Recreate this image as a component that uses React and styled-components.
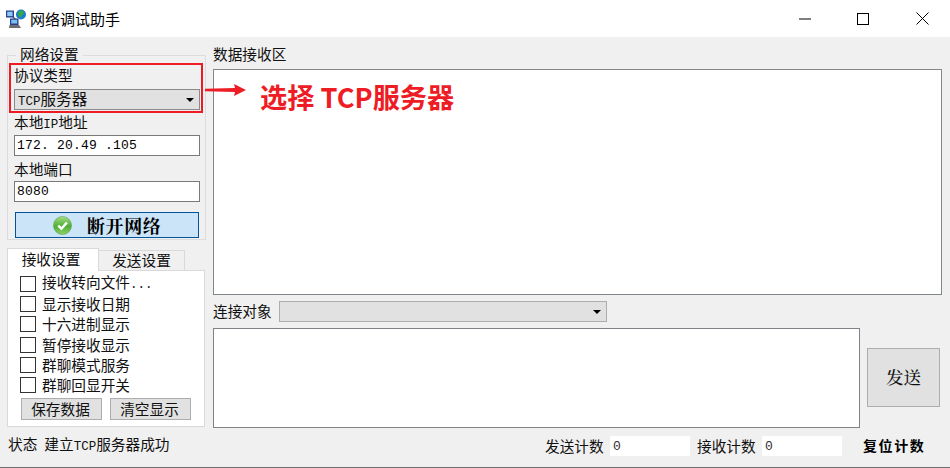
import React from "react";
import styled, { createGlobalStyle } from "styled-components";

const Global = createGlobalStyle`
  html, body { margin: 0; padding: 0; background: #f0f0f0; }
  * { box-sizing: border-box; }
  #root { width: 950px; height: 468px; overflow: hidden; }
`;
const CJK = `"Noto Sans CJK SC", "Liberation Sans", sans-serif`;
const MONO = `"Liberation Mono", "Noto Sans CJK SC", monospace`;

const Win = styled.div`
  position: relative; width: 950px; height: 468px; background: #f0f0f0;
  display: flex; flex-direction: column; font: 14.67px/16px ${CJK}; color: #111;
  border-bottom: 1px solid #6f6f6f;
`;
const Ascii = styled.span`font-family: ${MONO}; font-size: 12.5px;`;
const TitleBar = styled.header`
  height: 37px; flex: none; background: #fff; display: flex; align-items: center; padding: 0 0 0 6px;
`;
const AppName = styled.span`flex: 1; font-size: 15px; color: #000;`;
const WinBtn = styled.span`
  width: ${p => p.$w || 58}px; height: 37px; flex: none; display: flex; align-items: center; justify-content: center; margin-right: ${p => p.$mr || 0}px;
`;
const Body = styled.div`flex: 1; display: flex; padding: 0 9px 0 7px;`;
const Left = styled.div`width: 199px; flex: none; display: flex; flex-direction: column;`;
const Right = styled.div`flex: 1; margin-left: 7px; display: flex; flex-direction: column; min-width: 0;`;

const Group = styled.fieldset`
  margin: 11px 0 0; padding: 0; height: 192px; border: 1px solid #dcdcdc; width: 199px; min-width: 0;
  position: relative; display: block;
`;
const Legend = styled.legend`
  margin-left: 8px; padding: 0 4px; line-height: 12px; height: 14px;
`;
const Fields = styled.div`padding: 5px 6px 0 6px; display: flex; flex-direction: column;`;
const FieldLabel = styled.label`display: block; height: 16px; margin-bottom: ${p => p.$mb ?? 5}px; white-space: nowrap;`;
const Combo = styled.div`
  height: 21px; width: ${p => p.$w || 186}px; background: #e1e1e1; border: 1px solid ${p => p.$line || "#adadad"}; display: flex; align-items: center;
  padding-left: 3px; flex: none; margin-bottom: ${p => p.$mb || 0}px;
`;
const ComboText = styled.span`flex: 1; font-size: 15.6px; line-height: 18px;`;
const Caret = styled.span`
  width: 0; height: 0; border-left: 4px solid transparent; border-right: 4px solid transparent; border-top: 4px solid #000; margin-right: 5px;
`;
const Input = styled.div`
  height: 21px; width: 186px; background: #fff; border: 1px solid #7a7a7a; font: 13px/20px ${MONO}; padding-left: 2px; white-space: pre;
  letter-spacing: 0.2px; margin-bottom: ${p => p.$mb || 4}px; color: #000;
`;
const ConnectBtn = styled.div`
  margin: 5px 0 0 1px; width: 184px; height: 26px; background: #cce4f7; border: 1px solid #005499;
  display: flex; align-items: center; gap: 15px; padding-left: 37px;
  font: 700 18px/20px "Noto Serif CJK SC", ${CJK}; letter-spacing: 0.6px; color: #000;
`;

const TabRow = styled.div`display: flex; align-items: flex-end; height: 23px; margin-top: 8px;`;
const Tab = styled.div`
  height: ${p => p.$on ? 23 : 21}px; width: ${p => p.$on ? 92 : 86}px; background: ${p => p.$on ? "#fff" : "#f0f0f0"};
  border: 1px solid #d9d9d9; border-bottom: ${p => p.$on ? "none" : "1px solid #d9d9d9"}; ${p => p.$on ? "" : "border-left: none;"}
  display: flex; align-items: center; justify-content: center; padding-bottom: 2px; padding-right: ${p => p.$on ? 4 : 0}px;
  position: relative; z-index: ${p => p.$on ? 1 : 0};
`;
const Panel = styled.div`
  width: 198px; height: 157px; background: #fff; border: 1px solid #d9d9d9; margin-top: -1px; padding: 2.5px 0 0 12px;
`;
const Check = styled.div`
  display: flex; align-items: center; height: 20.35px; gap: 6px; white-space: nowrap;
`;
const Box = styled.span`width: 16px; height: 16px; border: 1px solid #333; background: #fff; flex: none;`;
const CheckText = styled.span`display: block;`;
const PanelBtns = styled.div`display: flex; gap: 8px; margin: 2.5px 0 0 1px;`;
const SmallBtn = styled.div`
  width: 81px; height: 22px; background: #e1e1e1; border: 1px solid #adadad; display: flex; align-items: center; justify-content: center; padding-right: 2px;
`;

const AreaLabel = styled.div`height: 16px; margin-top: 9px; white-space: nowrap;`;
const RecvArea = styled.div`
  height: 226px; width: 729px; margin-top: 7px; background: #fff; border: 1px solid #82878c; flex: none;
`;
const TargetRow = styled.div`display: flex; align-items: center; gap: 6px; height: 21px; margin-top: 6px; flex: none;`;
const TargetLabel = styled.span`width: 60px; flex: none; white-space: nowrap; position: relative; top: -1px;`;
const SendRow = styled.div`display: flex; align-items: center; margin-top: 6px; gap: 7px; flex: none;`;
const SendArea = styled.div`width: 647px; height: 100px; background: #fff; border: 1px solid #7f8388; flex: none;`;
const SendBtn = styled.div`
  width: 73px; height: 59px; background: #e1e1e1; border: 1px solid #adadad; display: flex; align-items: center; justify-content: center;
  font: 500 17.5px/20px "Noto Serif CJK SC", ${CJK}; color: #111; position: relative; top: -1px;
`;

const StatusBar = styled.footer`
  height: 20px; flex: none; display: flex; align-items: center; margin: 0 9px 11px 8px; white-space: nowrap;
`;
const Status = styled.span`flex: 1; display: flex; gap: 7px; margin-top: -1px;`;
const CountLabel = styled.span`width: 62px; margin-right: 3px; flex: none;`;
const CountValue = styled.span`
  width: 80px; height: 20px; background: #fff; font: 13px/22px ${MONO}; padding-left: 3px; margin-right: ${p => p.$mr}px; flex: none; color: #333;
`;
const Reset = styled.span`font-weight: 700; font-size: 14px; letter-spacing: 1.6px; width: 78px; flex: none; margin-top: -2px; color: #000;`;

const Highlight = styled.div`
  position: absolute; left: 9px; top: 63px; width: 194px; height: 50px; border: 2px solid #ed1c24; pointer-events: none;
`;
const ArrowSvg = styled.svg`position: absolute; left: 204px; top: 83px;`;
const Callout = styled.div`
  position: absolute; left: 260px; top: 78px; font: 700 27.2px/36px ${CJK}; color: #ee1c25; white-space: nowrap;
`;

const Logo = () => (
  <svg width="24" height="24" viewBox="0 0 24 24">
    <path d="M7 10 L11 14" stroke="#555" strokeWidth="1.2" />
    <rect x="0" y="3.5" width="8" height="7" fill="#24408f" />
    <rect x="1.2" y="4.7" width="5.4" height="4.4" fill="#8fc8f2" />
    <rect x="4" y="11.5" width="8.5" height="6.5" fill="#24408f" />
    <rect x="5.2" y="12.7" width="6" height="3.8" fill="#7cc0ee" />
    <path d="M3.5 18 H13 L15 21 H3 Z" fill="#6d6d6d" />
    <circle cx="15" cy="7.5" r="5" fill="#1c7cc9" />
    <path d="M12 5 q3 -2.5 5.5 -1 q1 3 -1.5 4 q-.5 3 -2.5 2 q-2 -2 -1.5 -5z" fill="#35a84a" />
  </svg>
);
const OkIcon = () => (
  <svg width="19" height="19" viewBox="0 0 20 20">
    <defs>
      <linearGradient id="okg" x1="0" y1="0" x2="0" y2="1">
        <stop offset="0" stopColor="#a6dd86" />
        <stop offset="0.55" stopColor="#4fae34" />
        <stop offset="1" stopColor="#8fd46a" />
      </linearGradient>
    </defs>
    <circle cx="10" cy="10" r="9.5" fill="url(#okg)" stroke="#5c9c48" strokeWidth="0.6" />
    <path d="M5.5 10 L8.8 13.4 L14.6 7" fill="none" stroke="#fff" strokeWidth="2.6" />
  </svg>
);

const checks = [
  <>接收转向文件<Ascii>...</Ascii></>,
  "显示接收日期", "十六进制显示", "暂停接收显示", "群聊模式服务", "群聊回显开关",
];

export default function App() {
  return (
    <Win>
      <Global />
      <TitleBar>
        <Logo />
        <AppName>网络调试助手</AppName>
        <WinBtn>
          <svg width="12" height="2" viewBox="0 0 12 2"><path d="M0 1H12" stroke="#000" /></svg>
        </WinBtn>
        <WinBtn $mr={2}>
          <svg width="12" height="12" viewBox="0 0 12 12"><rect x=".5" y=".5" width="11" height="11" fill="none" stroke="#000" /></svg>
        </WinBtn>
        <WinBtn $w={56}>
          <svg width="13" height="13" viewBox="0 0 13 13"><path d="M.5 .5L12.5 12.5M12.5 .5L.5 12.5" stroke="#000" fill="none" /></svg>
        </WinBtn>
      </TitleBar>
      <Body>
        <Left>
          <Group>
            <Legend>网络设置</Legend>
            <Fields>
              <FieldLabel $mb={6}>协议类型</FieldLabel>
              <Combo $line="#8a8a8a" $mb={4}><ComboText><Ascii>TCP</Ascii>服务器</ComboText><Caret /></Combo>
              <FieldLabel>本地<Ascii>IP</Ascii>地址</FieldLabel>
              <Input $mb={5}>172. 20.49 .105</Input>
              <FieldLabel $mb={4}>本地端口</FieldLabel>
              <Input $mb={5}>8080</Input>
              <ConnectBtn><OkIcon />断开网络</ConnectBtn>
            </Fields>
          </Group>
          <TabRow>
            <Tab $on>接收设置</Tab>
            <Tab>发送设置</Tab>
          </TabRow>
          <Panel>
            {checks.map((c, i) => <Check key={i}><Box /><CheckText>{c}</CheckText></Check>)}
            <PanelBtns>
              <SmallBtn>保存数据</SmallBtn>
              <SmallBtn>清空显示</SmallBtn>
            </PanelBtns>
          </Panel>
        </Left>
        <Right>
          <AreaLabel>数据接收区</AreaLabel>
          <RecvArea />
          <TargetRow>
            <TargetLabel>连接对象</TargetLabel>
            <Combo $w={328}><ComboText /><Caret /></Combo>
          </TargetRow>
          <SendRow>
            <SendArea />
            <SendBtn>发送</SendBtn>
          </SendRow>
        </Right>
      </Body>
      <StatusBar>
        <Status><span>状态</span><span>建立<Ascii>TCP</Ascii>服务器成功</span></Status>
        <CountLabel>发送计数</CountLabel>
        <CountValue $mr={7}>0</CountValue>
        <CountLabel>接收计数</CountLabel>
        <CountValue $mr={21}>0</CountValue>
        <Reset>复位计数</Reset>
      </StatusBar>
      <Highlight />
      <ArrowSvg width="44" height="14" viewBox="0 0 44 14">
        <path d="M1 5.8 L31 5 L30 1 L42 7 L30 13 L31 9 L1 8.2 Z" fill="#ee1c25" />
      </ArrowSvg>
      <Callout>选择 TCP服务器</Callout>
    </Win>
  );
}
